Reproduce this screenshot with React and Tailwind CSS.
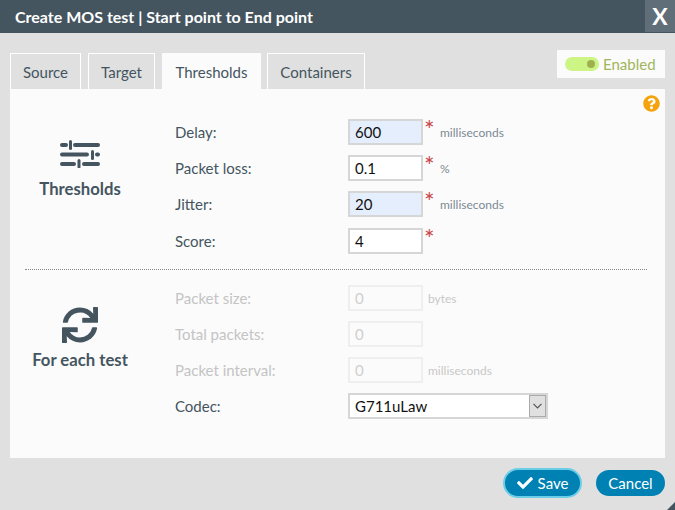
import React from "react";
import { FaSync, FaQuestionCircle, FaCheck } from "react-icons/fa";

const F = { fontFamily: "Lato, sans-serif" };

function Sliders() {
  return (
    <svg width="40" height="28" viewBox="0 0 40 28" fill="#44555f">
      <rect x="0" y="3" width="8" height="4" rx="2" />
      <rect x="13" y="3" width="27" height="4" rx="2" />
      <rect x="9" y="0" width="3" height="10" rx="1.5" />
      <rect x="0" y="12.5" width="29" height="4" rx="2" />
      <rect x="35" y="12.5" width="5" height="4" rx="2" />
      <rect x="31" y="10" width="3" height="10" rx="1.5" />
      <rect x="0" y="22" width="16" height="4" rx="2" />
      <rect x="22" y="22" width="18" height="4" rx="2" />
      <rect x="17.5" y="19" width="3" height="9.5" rx="1.5" />
    </svg>
  );
}

function Row({ label, value, unit, req, blue, disabled, last }) {
  return (
    <div className={`flex items-start h-[26px] ${last ? "" : "mb-[10px]"}`}>
      <div className={`w-[173px] text-[15px] leading-[26px] ${disabled ? "text-[#c4c4c4]" : "text-[#44555f]"}`}>{label}</div>
      <div
        className={`w-[75px] h-[26px] border-2 pl-[5px] text-[15px] leading-[22px] ${
          disabled
            ? "border-[#eeeeee] text-[#cfcfcf] bg-[#fbfbfb]"
            : `border-[#d6d6d6] text-[#111111] ${blue ? "bg-[#e4eefc]" : "bg-white"}`
        }`}
      >
        {value}
      </div>
      {req && <span className="w-[14px] pl-[1px] -mt-[1px] text-[#c9474b] text-[25px] leading-[22px]">*</span>}
      {unit && (
        <span className={`text-[12px] leading-[28px] ${req ? "ml-[3px]" : "ml-[5px]"} ${disabled ? "text-[#c8c8c8]" : "text-[#7d8a93]"}`}>{unit}</span>
      )}
    </div>
  );
}

function Tab({ children, active, w }) {
  return (
    <div
      className={`h-[36px] text-[15px] text-center text-[#44555f] ${w} ${
        active ? "bg-[#fbfbfb] leading-[38px]" : "bg-[#e0e0e0] border-l border-r border-t border-white leading-[37px]"
      }`}
    >
      {children}
    </div>
  );
}

function Side({ icon, title, gap }) {
  return (
    <div className="w-[140px] flex flex-col items-center">
      <div className="flex items-end justify-center">{icon}</div>
      <div className={`${gap} text-[16.7px] font-bold text-[#44555f] leading-[24px]`}>{title}</div>
    </div>
  );
}

export default function App() {
  return (
    <div className="relative w-[675px] h-[510px] bg-[#e0e0e0] overflow-hidden" style={F}>
      <div className="h-[33px] bg-[#44555f] flex items-center justify-between pl-[15px]">
        <div className="text-white font-bold text-[16px]">Create MOS test | Start point to End point</div>
        <div className="w-[30px] h-[32px] self-start bg-[#5f6e78] text-white font-bold text-[23px] leading-[32px] text-center">X</div>
      </div>

      <div className="px-[10px]">
        <div className="flex items-start pt-[20px] gap-[7px]">
          <Tab w="w-[71px]">Source</Tab>
          <Tab w="w-[67px]">Target</Tab>
          <Tab active w="w-[99px]">Thresholds</Tab>
          <div className="-ml-[1px]"><Tab w="w-[98px]">Containers</Tab></div>
          <div className="ml-auto -mt-[3px] w-[108px] h-[28px] bg-[#fbfbfb] flex items-center pl-[8px]">
            <div className="relative w-[34px] h-[14px] rounded-full bg-[#cdf586]">
              <div className="absolute right-[4px] top-[3px] w-[8px] h-[8px] rounded-full bg-[#9fb050]" />
            </div>
            <span className="ml-[4px] text-[15px] text-[#a2b55a]">Enabled</span>
          </div>
        </div>

        <div className="relative h-[369px] bg-[#fbfbfb]">
          <FaQuestionCircle className="absolute left-[633px] top-[6px] text-[#f5a30c]" size={17} />
          <div className="pt-[30px] h-[180px] flex">
            <div className="w-[165px] pt-[21px]">
              <Side icon={<Sliders />} gap="mt-[9px]" title="Thresholds" />
            </div>
            <div>
              <Row label="Delay:" value="600" unit="milliseconds" req blue />
              <Row label="Packet loss:" value="0.1" unit="%" req />
              <Row label="Jitter:" value="20" unit="milliseconds" req blue />
              <div className="h-px" />
              <Row label="Score:" value="4" req last />
            </div>
          </div>
          <div className="ml-[15px] mr-[18px] border-t border-dotted border-[#888888]" />
          <div className="pt-[15px] flex">
            <div className="w-[165px] pt-[22px]">
              <Side icon={<FaSync size={36} color="#44555f" />} gap="mt-[5px]" title="For each test" />
            </div>
            <div>
              <Row label="Packet size:" value="0" unit="bytes" disabled />
              <Row label="Total packets:" value="0" disabled />
              <Row label="Packet interval:" value="0" unit="milliseconds" disabled />
              <div className="flex h-[26px]">
                <div className="w-[173px] text-[15px] leading-[26px] text-[#44555f]">Codec:</div>
                <div className="w-[200px] h-[26px] border-2 border-[#d6d6d6] bg-white flex items-center justify-between">
                  <span className="pl-[5px] text-[15px] text-[#111111]">G711uLaw</span>
                  <div className="w-[17px] h-[22px] bg-[#e0e0e0] border border-[#ababab] flex items-center justify-center">
                    <svg width="9" height="6" viewBox="0 0 9 6" fill="none" stroke="#555555" strokeWidth="1.2">
                      <path d="M0.5 0.8 L4.5 4.8 L8.5 0.8" />
                    </svg>
                  </div>
                </div>
              </div>
            </div>
          </div>
        </div>

        <div className="flex justify-end items-center h-[52px] -mt-[1px] gap-[14px]">
          <button className="w-[79px] h-[30px] rounded-full bg-[#0081b4] border-2 border-[#6ccde6] text-white text-[15px] flex items-center justify-center gap-[5px]">
            <FaCheck size={16} />
            Save
          </button>
          <button className="w-[69px] h-[26px] rounded-full bg-[#0081b4] text-white text-[15px]">Cancel</button>
        </div>
      </div>
      <div className="absolute right-0 bottom-0 w-0 h-0 border-l-[8px] border-l-transparent border-b-[8px] border-b-[#44555f]" />
    </div>
  );
}
